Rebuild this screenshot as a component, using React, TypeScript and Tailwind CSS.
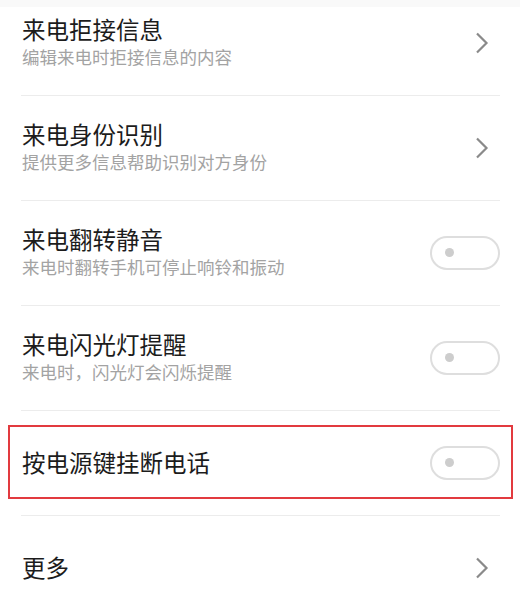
import { ReactNode } from 'react';

type Item = {
  title: string;
  desc?: string;
  kind: 'arrow' | 'toggle';
  highlight?: boolean;
};

const items: Item[] = [
  { title: '来电拒接信息', desc: '编辑来电时拒接信息的内容', kind: 'arrow' },
  { title: '来电身份识别', desc: '提供更多信息帮助识别对方身份', kind: 'arrow' },
  { title: '来电翻转静音', desc: '来电时翻转手机可停止响铃和振动', kind: 'toggle' },
  { title: '来电闪光灯提醒', desc: '来电时，闪光灯会闪烁提醒', kind: 'toggle' },
  { title: '按电源键挂断电话', kind: 'toggle', highlight: true },
  { title: '更多', kind: 'arrow' },
];

function Chevron() {
  return (
    <svg width="14" height="22" viewBox="0 0 14 22" className="mr-[11px]">
      <path d="M2 1.5 L11.5 11 L2 20.5" fill="none" stroke="#8a8a8a" strokeWidth="2.2" />
    </svg>
  );
}

function Toggle() {
  return (
    <div className="flex h-[34px] w-[70px] items-center rounded-full border-2 border-[#dedede] bg-white pl-[13px]">
      <span className="h-[9px] w-[9px] rounded-full bg-[#cdcdcd]" />
    </div>
  );
}

function Row({ item, children }: { item: Item; children: ReactNode }) {
  return (
    <div className="relative flex h-[103.5px] items-center justify-between pl-[22px] pr-[20px]">
      <div className="-mt-[1px] flex flex-col gap-[2px]">
        <span className="text-[23.5px] leading-[28px] text-[#1c1c1c]">{item.title}</span>
        {item.desc && (
          <span className="text-[17.5px] leading-[24px] text-[#a3a3a3]">{item.desc}</span>
        )}
      </div>
      {children}
      {item.highlight && (
        <div className="pointer-events-none absolute left-[8px] right-[7px] top-[14px] bottom-[16px] border-2 border-[#e23a3f]" />
      )}
    </div>
  );
}

export default function App() {
  return (
    <div
      className="h-[597px] w-[520px] overflow-hidden bg-white"
      style={{ fontFamily: '"Noto Sans CJK SC", "Noto Sans", sans-serif' }}
    >
      <div className="h-[7px] bg-[#f9f9f9]" />
      <div className="-mt-[16px] flex flex-col">
        {items.map((item, i) => (
          <div key={item.title}>
            {i > 0 && <div className="ml-[21px] mr-[20px] h-[1.5px] bg-[#ececec]" />}
            <Row item={item}>{item.kind === 'arrow' ? <Chevron /> : <Toggle />}</Row>
          </div>
        ))}
      </div>
    </div>
  );
}
